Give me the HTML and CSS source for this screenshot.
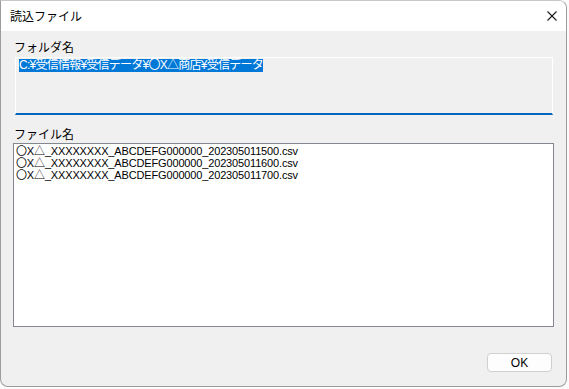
FILE: index.html
```html
<!DOCTYPE html>
<html lang="ja">
<head>
    <meta charset="UTF-8">
    <title>読込ファイル</title>
    <link rel="stylesheet" href="styles.css">
</head>
<body>
    <div class="dialog">
        <div class="titlebar">
            <span class="title">読込ファイル</span>
            <svg class="close-icon" viewBox="0 0 10 10" fill="none" stroke="#1a1a1a" stroke-width="1.1">
                <path d="M0.5 0.5L9.5 9.5"/>
                <path d="M9.5 0.5L0.5 9.5"/>
            </svg>
        </div>
        <div class="content">
            <div class="field-label">フォルダ名</div>
            <div class="path-box">
                <span class="path-text">C:¥受信情報¥受信データ¥〇X△商店¥受信データ</span>
            </div>
            <div class="field-label files-label">ファイル名</div>
            <div class="file-list">
                <div class="file-item">〇X△_XXXXXXXX_ABCDEFG000000_202305011500.csv</div>
                <div class="file-item">〇X△_XXXXXXXX_ABCDEFG000000_202305011600.csv</div>
                <div class="file-item">〇X△_XXXXXXXX_ABCDEFG000000_202305011700.csv</div>
            </div>
            <div class="footer">
                <button class="ok-btn">OK</button>
            </div>
        </div>
    </div>
</body>
</html>
```

FILE: styles.css
```css
* {
    margin: 0;
    padding: 0;
    box-sizing: border-box;
}

body {
    background: #fbfbfb;
    font-family: "Noto Sans CJK JP", sans-serif;
    color: #000;
}

.dialog {
    width: 567px;
    height: 387px;
    background: #f0f0f0;
    border: 1px solid #9c9c9c;
    border-top-color: #c8c8c8;
    border-radius: 0 8px 8px 8px;
    overflow: hidden;
    display: flex;
    flex-direction: column;
}

.titlebar {
    height: 30px;
    background: #ffffff;
    display: flex;
    align-items: center;
    justify-content: space-between;
    padding: 0 9px 0 9px;
}

.title {
    font-size: 12px;
    line-height: 16px;
}

.close-icon {
    width: 10px;
    height: 10px;
}

.content {
    flex: 1;
    display: flex;
    flex-direction: column;
    padding: 8px 12px 0 12px;
}

.field-label {
    font-size: 12px;
    line-height: 16px;
    height: 18px;
    padding-left: 1px;
}

.path-box {
    margin-left: 2px;
    width: 538px;
    height: 58px;
    background: #f0f0f0;
    border: 1px solid #ffffff;
    border-bottom: 2px solid #0067c0;
    padding: 1px 3px;
    display: flex;
    align-items: flex-start;
}

.path-text {
    background: #0078d7;
    color: #ffffff;
    font-family: "Liberation Sans", "Noto Sans CJK JP", sans-serif;
    font-size: 12px;
    line-height: 13px;
    letter-spacing: -0.75px;
}

.files-label {
    margin-top: 11px;
    height: 17px;
}

.file-list {
    width: 541px;
    height: 184px;
    background: #ffffff;
    border: 1px solid #828790;
    padding: 1px 2px;
}

.file-item {
    font-family: "Liberation Sans", "Noto Sans CJK JP", sans-serif;
    font-size: 11px;
    line-height: 12px;
    height: 12px;
    letter-spacing: -0.15px;
    white-space: nowrap;
}

.footer {
    display: flex;
    justify-content: flex-end;
    padding: 26px 2px 0 0;
}

.ok-btn {
    width: 65px;
    height: 19px;
    background: #fdfdfd;
    border: 1px solid #d0d0d0;
    border-radius: 4px;
    font-family: "Liberation Sans", sans-serif;
    font-size: 12px;
    color: #000;
}
```
